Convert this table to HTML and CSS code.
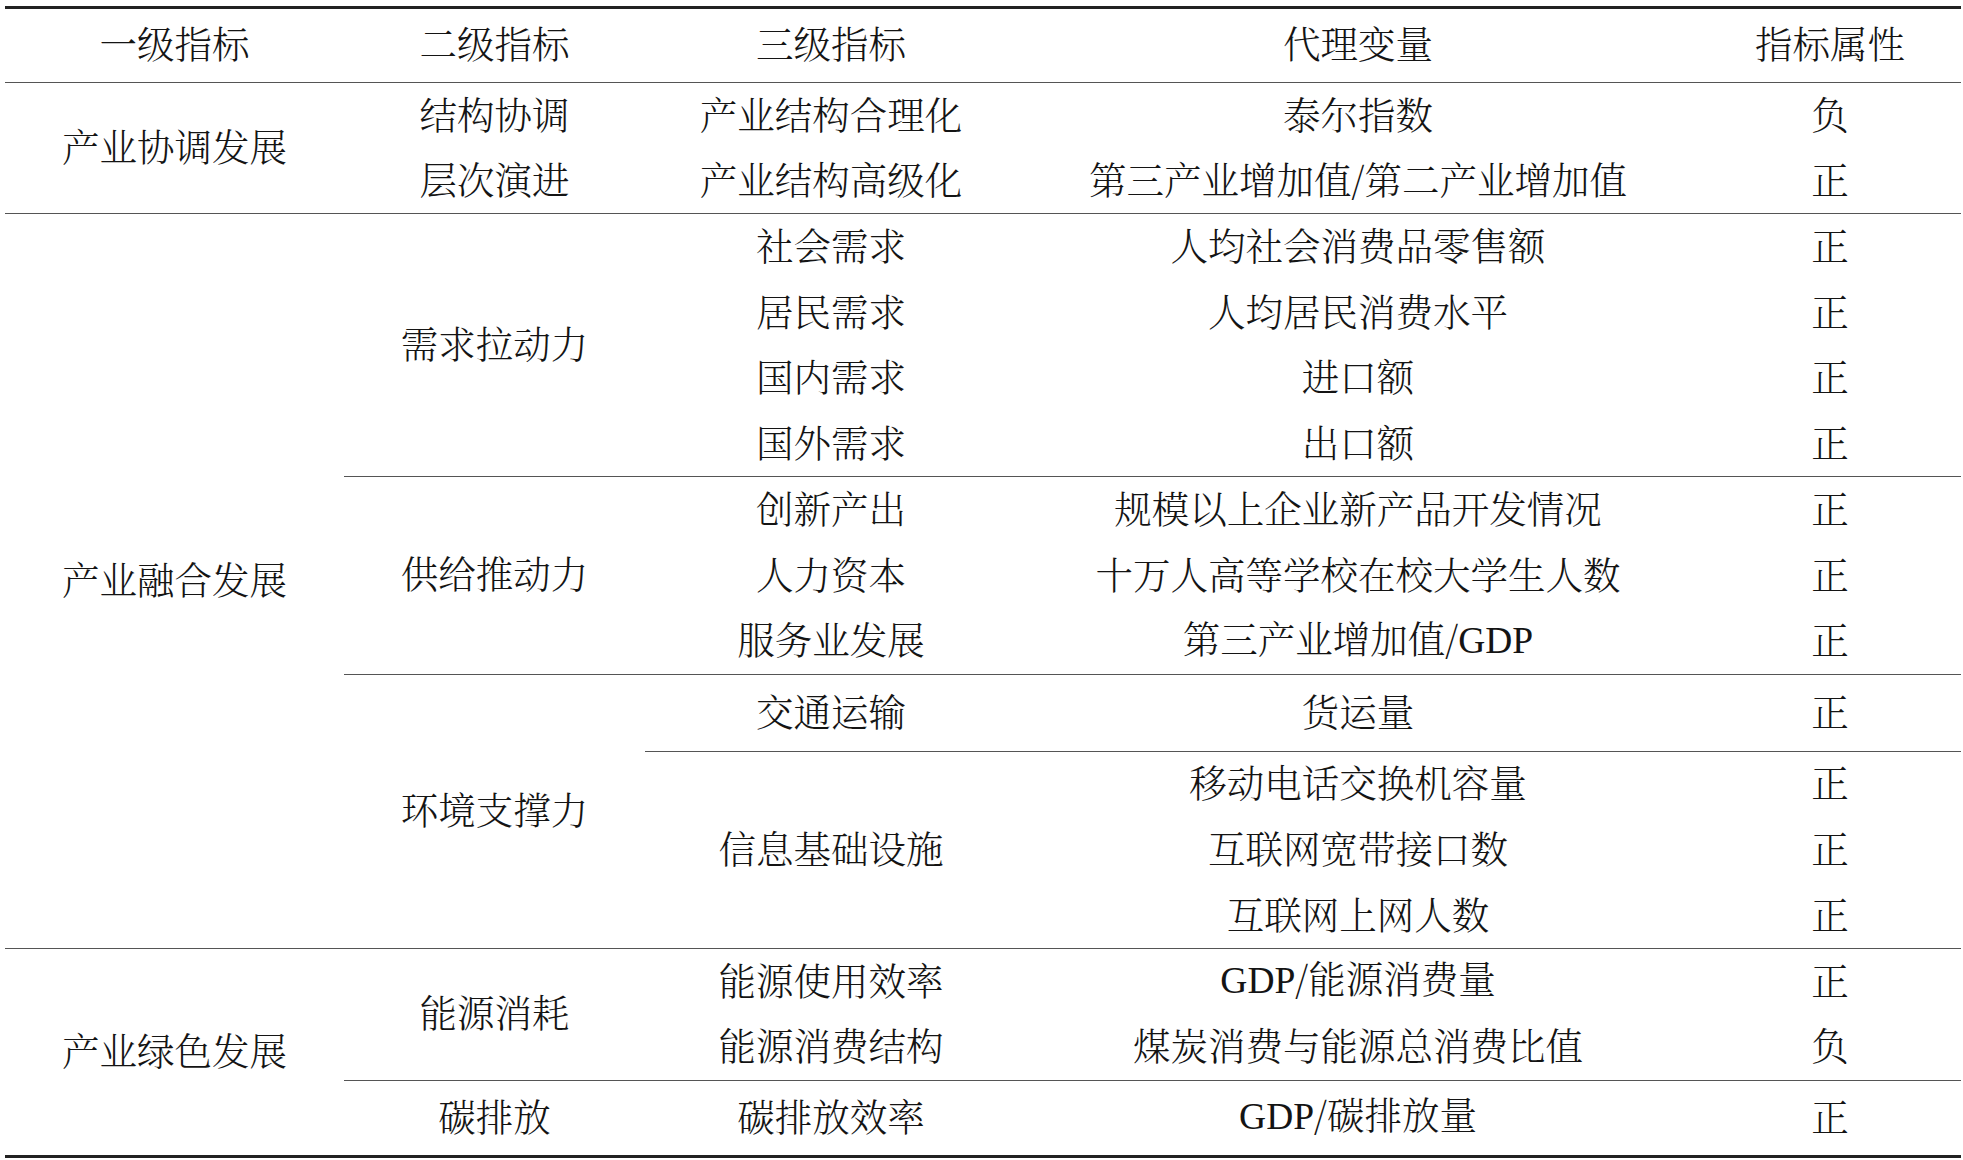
FILE: index.html
```html
<!DOCTYPE html>
<html lang="zh-CN">
<head>
<meta charset="utf-8">
<title>指标体系</title>
<link rel="stylesheet" href="styles.css">
</head>
<body>
<table class="idx">
  <colgroup>
    <col class="c1"><col class="c2"><col class="c3"><col class="c4"><col class="c5">
  </colgroup>
  <thead>
    <tr class="hd">
      <th>一级指标</th><th>二级指标</th><th>三级指标</th><th>代理变量</th><th>指标属性</th>
    </tr>
  </thead>
  <tbody>
    <tr class="r">
      <td rowspan="2" class="bl">产业协调发展</td>
      <td>结构协调</td><td>产业结构合理化</td><td>泰尔指数</td><td>负</td>
    </tr>
    <tr class="r">
      <td class="bl">层次演进</td><td class="bl">产业结构高级化</td><td class="bl">第三产业增加值/第二产业增加值</td><td class="bl">正</td>
    </tr>

    <tr class="r4">
      <td rowspan="11" class="bl">产业融合发展</td>
      <td rowspan="4" class="bl">需求拉动力</td>
      <td>社会需求</td><td>人均社会消费品零售额</td><td>正</td>
    </tr>
    <tr class="r4"><td>居民需求</td><td>人均居民消费水平</td><td>正</td></tr>
    <tr class="r4"><td>国内需求</td><td>进口额</td><td>正</td></tr>
    <tr class="r4"><td class="bl">国外需求</td><td class="bl">出口额</td><td class="bl">正</td></tr>

    <tr class="r3">
      <td rowspan="3" class="bl">供给推动力</td>
      <td>创新产出</td><td>规模以上企业新产品开发情况</td><td>正</td>
    </tr>
    <tr class="r3"><td>人力资本</td><td>十万人高等学校在校大学生人数</td><td>正</td></tr>
    <tr class="r3"><td class="bl">服务业发展</td><td class="bl">第三产业增加值/<span class="lat">GDP</span></td><td class="bl">正</td></tr>

    <tr class="rt">
      <td rowspan="4" class="bl">环境支撑力</td>
      <td class="bl">交通运输</td><td class="bl">货运量</td><td class="bl">正</td>
    </tr>
    <tr class="r3">
      <td rowspan="3" class="bl">信息基础设施</td>
      <td>移动电话交换机容量</td><td>正</td>
    </tr>
    <tr class="r3"><td>互联网宽带接口数</td><td>正</td></tr>
    <tr class="r3"><td class="bl">互联网上网人数</td><td class="bl">正</td></tr>

    <tr class="r2">
      <td rowspan="3">产业绿色发展</td>
      <td rowspan="2" class="bl">能源消耗</td>
      <td>能源使用效率</td><td><span class="lat">GDP</span>/能源消费量</td><td>正</td>
    </tr>
    <tr class="r2"><td class="bl">能源消费结构</td><td class="bl">煤炭消费与能源总消费比值</td><td class="bl">负</td></tr>
    <tr class="rc"><td>碳排放</td><td>碳排放效率</td><td><span class="lat">GDP</span>/碳排放量</td><td>正</td></tr>
  </tbody>
</table>
</body>
</html>
```

FILE: styles.css
```css
html, body {
  margin: 0;
  padding: 0;
  background: #ffffff;
}

body {
  padding: 6px 0 0 5px;
}

.idx {
  width: 1956px;
  table-layout: fixed;
  border-collapse: separate;
  border-spacing: 0;
  border-top: 3px solid #222222;
  border-bottom: 3px solid #222222;
  font-family: "Noto Serif CJK SC", "Noto Sans CJK SC", sans-serif;
  font-weight: 300;
  font-size: 37.5px;
  line-height: 1;
  color: #141414;
}

.c1 { width: 339px; }
.c2 { width: 301px; }
.c3 { width: 372px; }
.c4 { width: 682px; }
.c5 { width: 262px; }

.idx th,
.idx td {
  padding: 0 0 5px 0;
  text-align: center;
  vertical-align: middle;
  font-weight: 300;
  white-space: nowrap;
}

.idx th {
  border-bottom: 1.5px solid #555555;
}

.idx td.bl {
  border-bottom: 1.5px solid #555555;
}

.hd { height: 74px; }
.r  { height: 65.6px; }
.r4 { height: 65.8px; }
.r3 { height: 65.9px; }
.rt { height: 76.5px; }
.r2 { height: 66px; }
.rc { height: 74px; }

.lat {
  font-family: "Liberation Serif", serif;
  font-weight: 400;
}
```
